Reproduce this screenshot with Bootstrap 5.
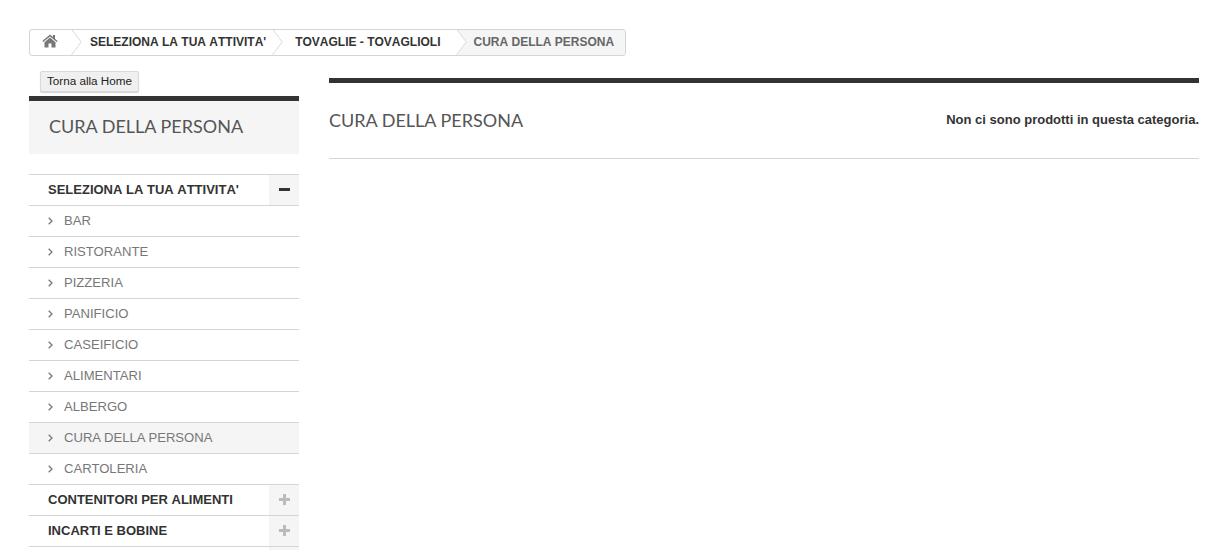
<!DOCTYPE html>
<html lang="it">
<head>
    <meta charset="UTF-8">
    <meta name="viewport" content="width=device-width, initial-scale=1.0">
    <title>Cura della persona</title>
    <link href="https://cdn.jsdelivr.net/npm/bootstrap@5.3.0/dist/css/bootstrap.min.css" rel="stylesheet">
    <style>
        html, body { height: 550px; overflow: hidden; }
        body { font-family: "Liberation Sans", Arial, sans-serif; font-size: 13px; color: #333; background: #fff; }
        .pagina { padding: 29px 14px 0 29px; }

        .briciole { display: inline-flex; height: 27px; border: 1px solid #d5d5d5; border-radius: 3px; font-size: 12px; font-weight: 700; font-kerning: none; line-height: 25px; overflow: hidden; }
        .briciole a { position: relative; display: block; color: #333; text-decoration: none; white-space: nowrap; }
        .briciole a.casa { width: 41px; padding: 0; display: flex; align-items: center; justify-content: center; }
        .briciole a.casa svg { margin-left: -2px; margin-top: -3px; }
        .briciole a.attivita { padding: 0 6px 0 19px; }
        .briciole a.tovaglie { padding: 0 15px 0 23px; }
        .briciole a:not(.ultima)::after { content: ""; position: absolute; z-index: 2; top: 0; right: -9px; width: 18px; height: 18px; margin-top: 3px; border-top: 1px solid #d5d5d5; border-right: 1px solid #d5d5d5; background: #fff; transform: rotate(45deg) skew(8deg, 8deg); clip-path: polygon(0 0, 100% 0, 100% 100%); }
        .briciole a.ultima { color: #666; background: #f5f5f5; padding: 0 11px 0 18px; }

        .colonne { display: flex; gap: 30px; }
        .laterale { width: 270px; flex: none; }
        .principale { flex: 1; padding-top: 22px; }

        .btn-home { display: block; margin: 15px 0 4px 11px; height: 21px; width: 99px; padding: 0 0 1px; font-size: 11.7px; line-height: 18px; color: #222; background: #f0f0f0; border: 1px solid #d9d9d9; border-radius: 2px; box-shadow: 0 1px 1px rgba(0, 0, 0, .18); }
        .titolo-box { border-top: 5px solid #333; background: #f5f5f5; height: 58px; padding-left: 20px; margin-bottom: 20px; font-family: Lato, sans-serif; font-size: 18px; line-height: 51px; color: #555; }

        .voci { list-style: none; margin: 0; padding: 0; border-top: 1px solid #d5d5d5; }
        .voci li { display: flex; align-items: center; height: 31px; border-bottom: 1px solid #d5d5d5; }
        .voci .testo { flex: 1; align-self: center; padding-left: 19px; white-space: nowrap; font-size: 13px; font-weight: 700; font-kerning: none; color: #333; }
        .voci .segno { width: 30px; height: 100%; background: #f5f5f5; display: flex; align-items: center; justify-content: center; }
        .voci .segno svg { margin-top: -1px; }
        .voci .sotto { padding-left: 19px; font-size: 13.1px; color: #777; }
        .voci .sotto svg { margin-right: 11px; }
        .voci .attiva { background: #f5f5f5; }
        .voci .mozza { height: 3px; border: 0; justify-content: flex-end; }

        .barra { height: 5px; background: #333; }
        .testata { height: 76px; border-bottom: 1px solid #d5d5d5; }
        .testata h1 { margin: 0; font-family: Lato, sans-serif; font-size: 18px; font-weight: 400; color: #555; }
        .testata p { margin: 0; padding-bottom: 2px; font-size: 13px; font-weight: 700; color: #333; }
    </style>
</head>
<body>
    <div class="pagina">
        <nav class="briciole">
            <a class="casa" href="#">
                <svg width="16" height="14" viewBox="0 0 16 14"><path fill="#777" d="M8 0.5 L0.3 7 L1.2 8.1 L8 2.4 L14.8 8.1 L15.7 7 L13 4.7 V1 H11 V3 Z M8 3.6 L2.5 8.2 V13.5 H6.5 V9.5 H9.5 V13.5 H13.5 V8.2 Z"/></svg>
            </a>
            <a class="attivita" href="#">SELEZIONA LA TUA ATTIVITA'</a>
            <a class="tovaglie" href="#">TOVAGLIE - TOVAGLIOLI</a>
            <a class="ultima" href="#">CURA DELLA PERSONA</a>
        </nav>

        <div class="colonne">
            <aside class="laterale">
                <button type="button" class="btn-home">Torna alla Home</button>
                <div class="titolo-box">CURA DELLA PERSONA</div>
                <ul class="voci">
                    <li>
                        <span class="testo">SELEZIONA LA TUA ATTIVITA'</span>
                        <span class="segno"><svg width="11" height="3" viewBox="0 0 11 3"><rect width="11" height="3" fill="#333"/></svg></span>
                    </li>
                    <li class="sotto"><svg width="5" height="8" viewBox="0 0 5 8"><path fill="none" stroke="#777" stroke-width="1.3" d="M0.7 0.7 L4 4 L0.7 7.3"/></svg>BAR</li>
                    <li class="sotto"><svg width="5" height="8" viewBox="0 0 5 8"><path fill="none" stroke="#777" stroke-width="1.3" d="M0.7 0.7 L4 4 L0.7 7.3"/></svg>RISTORANTE</li>
                    <li class="sotto"><svg width="5" height="8" viewBox="0 0 5 8"><path fill="none" stroke="#777" stroke-width="1.3" d="M0.7 0.7 L4 4 L0.7 7.3"/></svg>PIZZERIA</li>
                    <li class="sotto"><svg width="5" height="8" viewBox="0 0 5 8"><path fill="none" stroke="#777" stroke-width="1.3" d="M0.7 0.7 L4 4 L0.7 7.3"/></svg>PANIFICIO</li>
                    <li class="sotto"><svg width="5" height="8" viewBox="0 0 5 8"><path fill="none" stroke="#777" stroke-width="1.3" d="M0.7 0.7 L4 4 L0.7 7.3"/></svg>CASEIFICIO</li>
                    <li class="sotto"><svg width="5" height="8" viewBox="0 0 5 8"><path fill="none" stroke="#777" stroke-width="1.3" d="M0.7 0.7 L4 4 L0.7 7.3"/></svg>ALIMENTARI</li>
                    <li class="sotto"><svg width="5" height="8" viewBox="0 0 5 8"><path fill="none" stroke="#777" stroke-width="1.3" d="M0.7 0.7 L4 4 L0.7 7.3"/></svg>ALBERGO</li>
                    <li class="sotto attiva"><svg width="5" height="8" viewBox="0 0 5 8"><path fill="none" stroke="#777" stroke-width="1.3" d="M0.7 0.7 L4 4 L0.7 7.3"/></svg>CURA DELLA PERSONA</li>
                    <li class="sotto"><svg width="5" height="8" viewBox="0 0 5 8"><path fill="none" stroke="#777" stroke-width="1.3" d="M0.7 0.7 L4 4 L0.7 7.3"/></svg>CARTOLERIA</li>
                    <li>
                        <span class="testo">CONTENITORI PER ALIMENTI</span>
                        <span class="segno"><svg width="11" height="11" viewBox="0 0 11 11"><path fill="#bbb" d="M4 0 H7 V4 H11 V7 H7 V11 H4 V7 H0 V4 H4 Z"/></svg></span>
                    </li>
                    <li>
                        <span class="testo">INCARTI E BOBINE</span>
                        <span class="segno"><svg width="11" height="11" viewBox="0 0 11 11"><path fill="#bbb" d="M4 0 H7 V4 H11 V7 H7 V11 H4 V7 H0 V4 H4 Z"/></svg></span>
                    </li>
                    <li class="mozza"><span class="segno"></span></li>
                </ul>
            </aside>

            <main class="principale">
                <div class="barra"></div>
                <div class="testata d-flex justify-content-between align-items-center">
                    <h1>CURA DELLA PERSONA</h1>
                    <p>Non ci sono prodotti in questa categoria.</p>
                </div>
            </main>
        </div>
    </div>
    <script src="https://cdn.jsdelivr.net/npm/bootstrap@5.3.0/dist/js/bootstrap.bundle.min.js"></script>
</body>
</html>
